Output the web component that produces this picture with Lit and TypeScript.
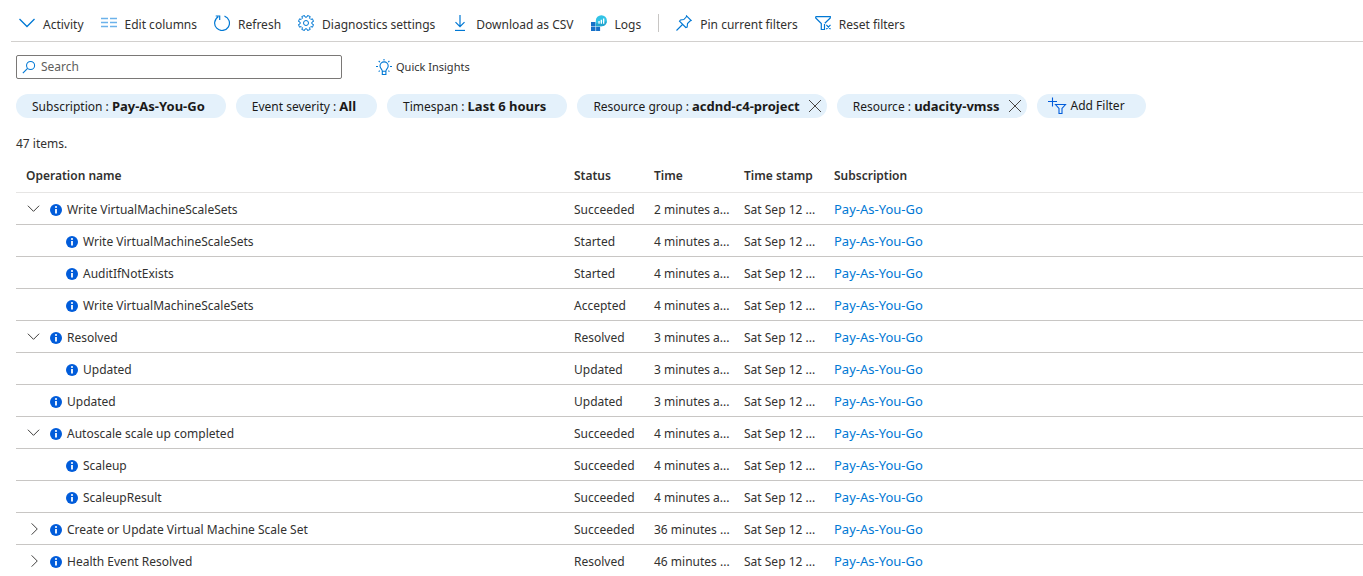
import { LitElement, html, css, svg, nothing } from "lit";
import { customElement, state } from "lit/decorators.js";
import { classMap } from "lit/directives/class-map.js";

interface Operation {
  name: string;
  status: string;
  time: string;
  stamp: string;
  children?: Operation[];
  open?: boolean;
}

interface Filter {
  label: string;
  value: string;
  removable?: boolean;
}

const STAMP = "Sat Sep 12 ...";

const op = (name: string, status: string, time: string, children?: Operation[], open = false): Operation => ({
  name,
  status,
  time,
  stamp: STAMP,
  children,
  open,
});

const OPERATIONS: Operation[] = [
  op("Write VirtualMachineScaleSets", "Succeeded", "2 minutes a...", [
    op("Write VirtualMachineScaleSets", "Started", "4 minutes a..."),
    op("AuditIfNotExists", "Started", "4 minutes a..."),
    op("Write VirtualMachineScaleSets", "Accepted", "4 minutes a..."),
  ], true),
  op("Resolved", "Resolved", "3 minutes a...", [op("Updated", "Updated", "3 minutes a...")], true),
  op("Updated", "Updated", "3 minutes a..."),
  op("Autoscale scale up completed", "Succeeded", "4 minutes a...", [
    op("Scaleup", "Succeeded", "4 minutes a..."),
    op("ScaleupResult", "Succeeded", "4 minutes a..."),
  ], true),
  op("Create or Update Virtual Machine Scale Set", "Succeeded", "36 minutes ...", []),
  op("Health Event Resolved", "Resolved", "46 minutes ...", []),
];

const FILTERS: Filter[] = [
  { label: "Subscription", value: "Pay-As-You-Go" },
  { label: "Event severity", value: "All" },
  { label: "Timespan", value: "Last 6 hours" },
  { label: "Resource group", value: "acdnd-c4-project", removable: true },
  { label: "Resource", value: "udacity-vmss", removable: true },
];

/* Outline of an eight-toothed cog centred on 8,8. */
const cogPath = (() => {
  const points: string[] = [];
  const at = (r: number, deg: number) => {
    const a = (deg * Math.PI) / 180;
    return `${(8 + r * Math.cos(a)).toFixed(2)} ${(8 + r * Math.sin(a)).toFixed(2)}`;
  };
  for (let i = 0; i < 8; i++) {
    const c = i * 45 + 22.5;
    points.push(at(6, c - 13), at(7.7, c - 11), at(7.7, c + 11), at(6, c + 13));
  }
  return `M${points.join("L")}Z`;
})();

const ICONS = {
  activity: svg`<path d="M.5 4 8 11.500 15.500 4" stroke-width="1.300"/>`,
  columns: svg`<path d="M0 3.500h7M9 3.500h7M0 7.500h7M9 7.500h7M0 11.500h7M9 11.500h7" stroke="#6cb2ea" stroke-width="1.600"/>`,
  refresh: svg`<path d="M10.500 1.100A7.400 7.400 0 1 1 4.300 1.700M1.700 1h4v4" stroke-width="1.200"/>`,
  settings: svg`<path d=${cogPath} stroke-linejoin="round"/><circle cx="8" cy="8" r="2.500"/>`,
  download: svg`<path d="M8 0v11.500M3.500 7.200 8 11.700l4.500-4.500" stroke-width="1.200"/><path d="M3 15.500h10" stroke-width="1.300"/>`,
  logs: svg`<g stroke="none">
    <path d="M0 7h4.500v4.200H0zM0 11.800h4.500V16H0zM5.100 11.800h4V16h-4z" fill="#1570c8"/>
    <path d="M4.800 11.200V5.800A5.600 5.600 0 0 1 10.400.2a5.500 5.500 0 1 1 0 11z" fill="#32c3e6"/>
    <path d="M4.800 11.200V8.600L15.900 6.200a5.600 5.600 0 0 1-5.500 5z" fill="#22a5cf"/>
    <path d="M7.400 6h1.300v2.800H7.400zM9.700 4.700H11v4.100H9.700zM12 3.400h1.300v5.400H12z" fill="#fff"/></g>`,
  pin: svg`<path d="M10.500.8 15.200 5.500 14 6 11.500 8.500 11.200 12 9.800 12.500 3.500 6.200 4.500 5 7.800 4.600 10.200 2zM6.500 9.500.5 15.500" stroke-width="1.100"/>`,
  reset: svg`<path d="M.7 1.600h14.600v1.300L9.800 8.300M.7 1.600v1.300L6.300 8.500v6h3.200V9M11.300 9.800l4.200 4.400M15.500 9.800l-4.200 4.400" stroke-width="1.200"/>`,
  bulb: svg`<path d="M6.300 12.200C6.300 10.200 4 9.500 4 7a4.100 4.100 0 0 1 8.200 0c0 2.500-2.300 3.200-2.300 5.200zM6.300 12.500v3h3.600v-3M8 0v1.500M2.700 2l1.200 1.200M13.400 2l-1.200 1.200M0 7.500h2M14 7.500h2M2.700 12.600l1-1M13.400 12.600l-1-1" stroke-width="1.100"/>`,
  search: svg`<circle cx="9.800" cy="6.200" r="4.600" stroke-width="1.200"/><path d="M6.400 9.600 1 15" stroke-width="1.300"/>`,
  close: svg`<path d="M2 2l12 12M14 2 2 14"/>`,
  addFilter: svg`<path d="M3.500-.5v9M-1 3.500h9M6.500 6.500h10L13 10.500v5h-3v-5z" stroke-width="1.100"/>`,
  down: svg`<path d="M2 4.500 8 10.500 14 4.500"/>`,
  right: svg`<path d="M6 2 12 8 6 14"/>`,
};

const icon = (name: keyof typeof ICONS) =>
  html`<svg class="icon" viewBox="0 0 16 16" aria-hidden="true">${ICONS[name]}</svg>`;

@customElement("app-root")
export class ActivityLog extends LitElement {
  static styles = css`
    :host {
      display: block;
      background: #fff;
      color: #323130;
      font: 12px/20px "Noto Sans", "Open Sans", sans-serif;
    }
    button {
      font: inherit;
      color: inherit;
      background: none;
      border: 0;
      padding: 0;
      cursor: pointer;
    }
    .icon {
      width: 16px;
      height: 16px;
      flex: none;
      fill: none;
      stroke: #0078d4;
    }
    .toolbar {
      display: flex;
      align-items: center;
      gap: 17px;
      margin-left: 11px;
      padding: 13px 8px 4px;
      border-bottom: 1px solid #d2d0ce;
    }
    .command {
      display: flex;
      align-items: center;
      gap: 8px;
      height: 24px;
      white-space: nowrap;
    }
    .command .icon {
      margin-bottom: 4px;
    }
    .divider {
      width: 1px;
      height: 18px;
      margin-bottom: 4px;
      background: #c8c6c4;
    }
    .find {
      display: flex;
      align-items: center;
      gap: 34px;
      padding: 13px 16px 0;
    }
    .search {
      display: flex;
      align-items: center;
      gap: 5px;
      box-sizing: border-box;
      width: 326px;
      height: 24px;
      padding: 0 5px;
      border: 1px solid #7a7876;
      border-radius: 2px;
    }
    .search .icon {
      width: 14px;
      height: 14px;
    }
    .search input {
      flex: 1;
      min-width: 0;
      border: 0;
      padding: 0;
      outline: 0;
      background: none;
      color: inherit;
      font: inherit;
    }
    .search input::placeholder {
      color: #605e5c;
      opacity: 1;
    }
    .insights {
      display: flex;
      align-items: center;
      gap: 4px;
      font-size: 11px;
    }
    .filters {
      display: flex;
      flex-wrap: wrap;
      gap: 10px;
      padding: 15px 16px 0;
    }
    .chip {
      display: flex;
      align-items: center;
      height: 24px;
      padding: 0 21px 0 16px;
      border-radius: 12px;
      background: #e4f1fb;
      color: #1b1a19;
      white-space: nowrap;
    }
    .chip.removable {
      gap: 7px;
      padding-right: 4px;
    }
    .chip b {
      font-size: 13px;
      font-weight: 700;
    }
    .remove {
      display: flex;
    }
    .remove .icon {
      stroke: #484644;
    }
    .chip.add {
      gap: 5px;
      padding-left: 11px;
    }
    .add .icon {
      width: 18px;
      overflow: visible;
      stroke: #015cda;
    }
    .count {
      margin: 0;
      padding: 16px 16px 4px;
    }
    .grid {
      padding-left: 16px;
    }
    table {
      width: 100%;
      table-layout: fixed;
      border-collapse: separate;
      border-spacing: 0;
    }
    .name {
      width: 548px;
    }
    .status {
      width: 80px;
    }
    .time {
      width: 90px;
    }
    th,
    td {
      box-sizing: border-box;
      height: 32px;
      padding: 2px 0 0 10px;
      border-bottom: 1px solid #c8c6c4;
      text-align: left;
      white-space: nowrap;
      overflow: hidden;
      text-overflow: ellipsis;
    }
    th {
      height: 35px;
      font-weight: 600;
      border-bottom-color: #e6e5e4;
    }
    .cell {
      display: flex;
      align-items: center;
      gap: 5px;
      padding-left: 24px;
    }
    .cell.parent {
      padding-left: 0;
    }
    .cell.child {
      padding-left: 40px;
    }
    .toggle {
      display: flex;
      width: 19px;
      padding-bottom: 2px;
    }
    .toggle .icon {
      width: 15px;
      stroke: #323130;
    }
    .info {
      width: 12px;
      height: 12px;
      flex: none;
    }
    a {
      color: #0078d4;
      font-size: 13px;
      text-decoration: none;
    }
  `;

  @state() private operations = OPERATIONS;
  @state() private filters = FILTERS;

  private toggle(target: Operation) {
    this.operations = this.operations.map((o) => (o === target ? { ...o, open: !o.open } : o));
  }

  private removeFilter(target: Filter) {
    this.filters = this.filters.filter((f) => f !== target);
  }

  private command(name: keyof typeof ICONS, label: string) {
    return html`<button class="command" type="button">${icon(name)}<span>${label}</span></button>`;
  }

  private row(o: Operation, child = false): unknown {
    return html`
      <tr>
        <td>
          <div class=${classMap({ cell: true, child, parent: !!o.children })}>
            ${o.children
              ? html`<button
                  class="toggle"
                  type="button"
                  aria-label="Toggle ${o.name}"
                  aria-expanded=${o.open ? "true" : "false"}
                  @click=${() => this.toggle(o)}
                >${icon(o.open ? "down" : "right")}</button>`
              : nothing}
            <svg class="info" viewBox="0 0 12 12" aria-hidden="true">
              <circle cx="6" cy="6" r="6" fill="#015cda" />
              <path d="M5.100 5h1.800v4.600H5.100z" fill="#fff" />
              <circle cx="6" cy="3" r="1.100" fill="#fff" />
            </svg>
            <span>${o.name}</span>
          </div>
        </td>
        <td>${o.status}</td>
        <td>${o.time}</td>
        <td>${o.stamp}</td>
        <td><a href="#subscription">Pay-As-You-Go</a></td>
      </tr>
      ${o.open ? o.children?.map((c) => this.row(c, true)) : nothing}
    `;
  }

  render() {
    return html`
      <div class="toolbar" role="toolbar">
        ${this.command("activity", "Activity")} ${this.command("columns", "Edit columns")}
        ${this.command("refresh", "Refresh")} ${this.command("settings", "Diagnostics settings")}
        ${this.command("download", "Download as CSV")} ${this.command("logs", "Logs")}
        <span class="divider"></span>
        ${this.command("pin", "Pin current filters")} ${this.command("reset", "Reset filters")}
      </div>
      <div class="find">
        <label class="search">
          ${icon("search")}
          <input type="text" placeholder="Search" aria-label="Search" />
        </label>
        <button class="insights" type="button">${icon("bulb")}<span>Quick Insights</span></button>
      </div>
      <div class="filters">
        ${this.filters.map(
          (f) => html`<div class=${classMap({ chip: true, removable: !!f.removable })}>
            <span>${f.label} : <b>${f.value}</b></span>
            ${f.removable
              ? html`<button class="remove" type="button" aria-label="Remove ${f.label}" @click=${() => this.removeFilter(f)}>
                  ${icon("close")}
                </button>`
              : nothing}
          </div>`
        )}
        <button class="chip add" type="button">${icon("addFilter")}<span>Add Filter</span></button>
      </div>
      <p class="count">47 items.</p>
      <div class="grid">
        <table>
          <thead>
            <tr>
              <th class="name" scope="col">Operation name</th>
              <th class="status" scope="col">Status</th>
              <th class="time" scope="col">Time</th>
              <th class="time" scope="col">Time stamp</th>
              <th scope="col">Subscription</th>
            </tr>
          </thead>
          <tbody>
            ${this.operations.map((o) => this.row(o))}
          </tbody>
        </table>
      </div>
    `;
  }
}
